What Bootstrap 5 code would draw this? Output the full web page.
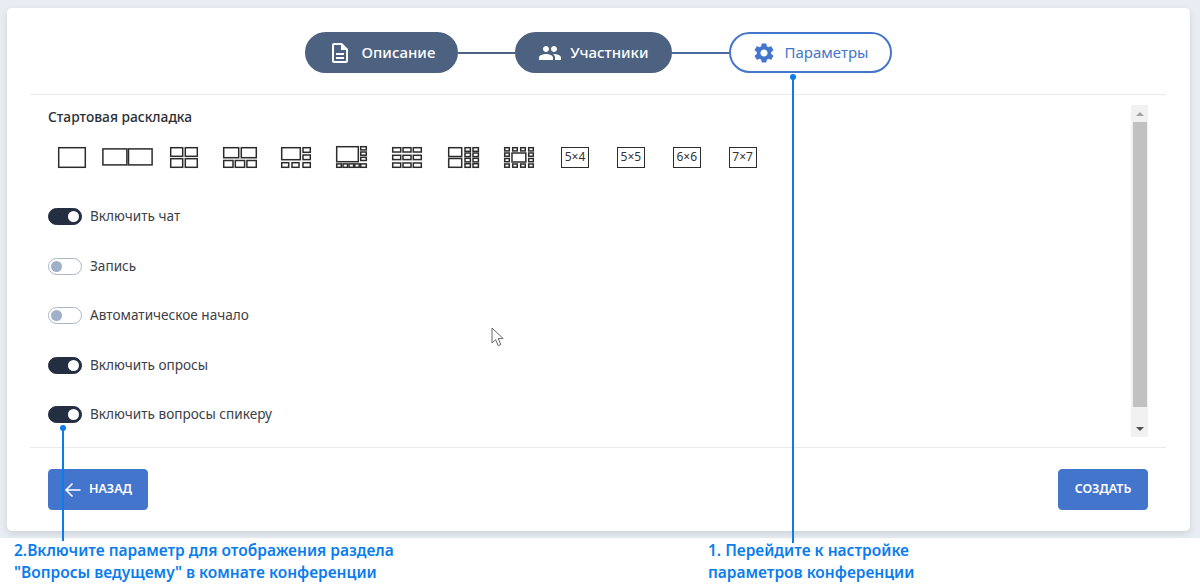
<!DOCTYPE html>
<html lang="ru">
<head>
<meta charset="utf-8">
<title>Параметры</title>
<link href="https://cdn.jsdelivr.net/npm/bootstrap@5.3.0/dist/css/bootstrap.min.css" rel="stylesheet">
<style>
html,body{height:586px;overflow:hidden;background:#fff;}
body{font-family:"Noto Sans","Open Sans",sans-serif;color:#3c4149;position:relative;}
.shell{height:538px;background:#e9edf3;padding:8px 10px 7px 7px;}
.panel{height:523px;border:0;border-radius:5px;box-shadow:0 3px 7px rgba(40,50,70,.14);}
.stepper{padding-top:24px;height:86px;}
.stepitem{height:41px;border-radius:21px;padding:0 23px;background:#4d6280;color:#fff;font-size:15px;font-weight:500;border:2px solid #4d6280;}
.stepitem svg{width:24px;height:24px;fill:currentColor;flex:none;}
.stepitem.gap-a{gap:10px;padding:0 21px;}
.stepitem.gap-b{gap:8px;padding:0 21px;}
.stepitem.gap-c{gap:9px;padding:0 22px 0 21px;background:#fff;color:#4375cc;border-color:#4375cc;font-weight:400;}
.connector{width:57px;height:2px;background:#4d6280;margin-top:20px;}
.connector.last{background:#4a6a9e;}
.rule{height:1px;background:#e8e9ea;margin:0 24px 0 23px;flex:none;}
.bodyarea{height:352px;padding:10px 42px 10px 41px;}
.settings{min-width:0;}
.heading{font-size:13.75px;font-weight:500;color:#2b2f36;line-height:24px;}
.layouts{display:grid;grid-template-columns:repeat(13,55.9px);margin:17px 0 0 -4px;height:22px;}
.cell{display:flex;justify-content:center;align-items:center;}
.cell svg{display:block;fill:none;stroke:#2c2c2c;stroke-width:1.5;overflow:visible;}
.countbox{width:28px;height:21px;border:1.5px solid #2c2c2c;font-size:12px;color:#333;line-height:18px;text-align:center;}
.toggles{margin-top:40px;gap:32.5px;}
.togglerow{height:17px;margin:0;padding:0;min-height:0;gap:8px;}
.togglerow .form-check-input{width:34px;height:17px;margin:0;float:none;border-radius:9px;box-shadow:none;border:1.5px solid #a9b6c9;background-color:#fff;background-size:auto;background-position:2px center;
 background-image:url("data:image/svg+xml,%3csvg xmlns='http://www.w3.org/2000/svg' width='11' height='11'%3e%3ccircle cx='5.5' cy='5.5' r='5.5' fill='%23a0b0c8'/%3e%3c/svg%3e");}
.togglerow .form-check-input:checked{background-color:#232e40;border-color:#232e40;background-position:right 2px center;
 background-image:url("data:image/svg+xml,%3csvg xmlns='http://www.w3.org/2000/svg' width='11' height='11'%3e%3ccircle cx='5.5' cy='5.5' r='5.5' fill='%23fff'/%3e%3c/svg%3e");}
.togglerow .form-check-label{font-size:13.6px;color:#3c4149;line-height:17px;padding-bottom:2px;}
.fakebar{width:17px;background:#f1f1f1;flex:none;}
.fakebar .arrow{height:17px;display:flex;align-items:center;justify-content:center;}
.arrow i{display:block;width:0;height:0;border-left:4px solid transparent;border-right:4px solid transparent;}
.arrow .up{border-bottom:4px solid #a3a3a3;}
.arrow .down{border-top:4px solid #505050;}
.thumb{height:285px;background:#c1c1c1;margin:0 1px 0 2px;}
.footerbar{padding:21px 42px 0 41px;}
.actionbtn{height:41px;background:#4375cc;border:1px solid #4375cc;color:#fff;font-size:12.5px;font-weight:600;border-radius:4px;padding:0;display:flex;align-items:center;justify-content:center;gap:7px;}
.actionbtn:hover{background:#4375cc;color:#fff;}
.actionbtn.back{width:100px;}
.actionbtn.create{width:90px;}
.actionbtn svg{width:18px;height:18px;stroke:#fff;stroke-width:1.6;fill:none;}
.notes{height:48px;padding-top:1px;color:#0a7cee;font-size:15.5px;font-weight:600;line-height:22px;}
.noteleft{margin-left:14px;width:694px;}
.pointer{position:absolute;width:2px;background:#0a7cee;}
.pointer::before{content:"";position:absolute;left:-2px;top:-3px;width:6px;height:6px;border-radius:50%;background:#0a7cee;}
.pointer.one{left:792px;top:77px;height:466px;}
.pointer.two{left:62px;top:428px;height:113px;}
.cursorglyph{position:absolute;left:491px;top:327px;width:14px;height:20px;}
</style>
</head>
<body>
<div class="shell">
  <div class="card panel">
    <div class="stepper d-flex justify-content-center align-items-start">
      <div class="stepitem gap-a d-flex align-items-center">
        <svg viewBox="0 0 24 24"><path d="M8 16h8v2H8zm0-4h8v2H8zm6-10H6c-1.1 0-2 .9-2 2v16c0 1.1.89 2 1.99 2H18c1.1 0 2-.9 2-2V8l-6-6zm4 18H6V4h7v5h5v11z"/></svg>
        <span>Описание</span>
      </div>
      <div class="connector"></div>
      <div class="stepitem gap-b d-flex align-items-center">
        <svg viewBox="0 0 24 24"><path d="M16 11c1.66 0 2.99-1.34 2.99-3S17.66 5 16 5c-1.66 0-3 1.34-3 3s1.34 3 3 3zm-8 0c1.66 0 2.99-1.34 2.99-3S9.66 5 8 5C6.34 5 5 6.34 5 8s1.34 3 3 3zm0 2c-2.33 0-7 1.17-7 3.5V19h14v-2.5c0-2.33-4.67-3.5-7-3.5zm8 0c-.29 0-.62.02-.97.05 1.16.84 1.97 1.97 1.97 3.45V19h6v-2.5c0-2.33-4.67-3.5-7-3.5z"/></svg>
        <span>Участники</span>
      </div>
      <div class="connector last"></div>
      <div class="stepitem gap-c d-flex align-items-center">
        <svg viewBox="0 0 24 24"><path d="M19.14 12.94c.04-.3.06-.61.06-.94 0-.32-.02-.64-.07-.94l2.03-1.58c.18-.14.23-.41.12-.61l-1.92-3.32c-.12-.22-.37-.29-.59-.22l-2.39.96c-.5-.38-1.03-.7-1.62-.94l-.36-2.54c-.04-.24-.24-.41-.48-.41h-3.84c-.24 0-.43.17-.47.41l-.36 2.54c-.59.24-1.13.57-1.62.94l-2.39-.96c-.22-.08-.47 0-.59.22L2.74 8.87c-.12.21-.08.47.12.61l2.03 1.58c-.05.3-.09.63-.09.94s.02.64.07.94l-2.03 1.58c-.18.14-.23.41-.12.61l1.92 3.32c.12.22.37.29.59.22l2.39-.96c.5.38 1.03.7 1.62.94l.36 2.54c.05.24.24.41.48.41h3.84c.24 0 .44-.17.47-.41l.36-2.54c.59-.24 1.13-.56 1.62-.94l2.39.96c.22.08.47 0 .59-.22l1.92-3.32c.12-.22.07-.47-.12-.61l-2.01-1.58zM12 15.6c-1.98 0-3.6-1.62-3.6-3.6s1.62-3.6 3.6-3.6 3.6 1.62 3.6 3.6-1.62 3.6-3.6 3.6z"/></svg>
        <span>Параметры</span>
      </div>
    </div>
    <div class="rule"></div>
    <div class="bodyarea d-flex justify-content-between">
      <div class="settings flex-grow-1">
        <div class="heading">Стартовая раскладка</div>
        <div class="layouts">
          <div class="cell"><svg width="28" height="21"><rect x=".7" y=".7" width="26.6" height="19.6"/></svg></div>
          <div class="cell"><svg width="51" height="18"><rect x=".9" y=".9" width="24" height="16"/><rect x="26.5" y=".9" width="23.6" height="16"/></svg></div>
          <div class="cell"><svg width="28" height="21"><rect x=".7" y=".7" width="12" height="8.6"/><rect x="15.3" y=".7" width="12" height="8.6"/><rect x="0.7" y="11.7" width="12" height="8.6"/><rect x="15.3" y="11.7" width="12" height="8.6"/></svg></div>
          <div class="cell"><svg width="34" height="21"><rect x=".7" y=".7" width="15" height="10"/><rect x="18.3" y=".7" width="15" height="10"/><rect x=".7" y="13.5" width="9.3" height="6.8"/><rect x="12.3" y="13.5" width="9.3" height="6.8"/><rect x="23.9" y="13.5" width="9.4" height="6.8"/></svg></div>
          <div class="cell"><svg width="30" height="21"><rect x=".7" y=".7" width="18.6" height="12"/><rect x="22" y=".7" width="7.3" height="4.6"/><rect x="22" y="8" width="7.3" height="4.6"/><rect x=".7" y="15.7" width="7" height="4.6"/><rect x="11" y="15.7" width="7" height="4.6"/><rect x="22" y="15.7" width="7.3" height="4.6"/></svg></div>
          <div class="cell"><svg width="31" height="22"><rect x=".7" y=".7" width="21.6" height="15"/><rect x="24.7" y=".7" width="5.6" height="3.2"/><rect x="24.7" y="6" width="5.6" height="3.2"/><rect x="24.7" y="11.3" width="5.6" height="3.2"/><rect x="24.7" y="17.9" width="5.6" height="3.4"/><rect x=".7" y="17.9" width="4.6" height="3.4"/><rect x="7" y="17.9" width="4.6" height="3.4"/><rect x="13" y="17.9" width="4.6" height="3.4"/><rect x="18.8" y="17.9" width="4.4" height="3.4"/></svg></div>
          <div class="cell"><svg width="30" height="21"><rect x=".7" y=".7" width="8" height="4.3"/><rect x="11" y=".7" width="8" height="4.3"/><rect x="21.3" y=".7" width="8" height="4.3"/><rect x=".7" y="8.3" width="8" height="4.3"/><rect x="11" y="8.3" width="8" height="4.3"/><rect x="21.3" y="8.3" width="8" height="4.3"/><rect x=".7" y="16" width="8" height="4.3"/><rect x="11" y="16" width="8" height="4.3"/><rect x="21.3" y="16" width="8" height="4.3"/></svg></div>
          <div class="cell"><svg width="31" height="21"><rect x=".7" y=".7" width="13" height="8.8"/><rect x=".7" y="11.5" width="13" height="8.8"/><rect x="17" y=".7" width="5.4" height="3.6"/><rect x="25" y=".7" width="5.4" height="3.6"/><rect x="17" y="6" width="5.4" height="3.6"/><rect x="25" y="6" width="5.4" height="3.6"/><rect x="17" y="11.3" width="5.4" height="3.6"/><rect x="25" y="11.3" width="5.4" height="3.6"/><rect x="17" y="16.7" width="5.4" height="3.6"/><rect x="25" y="16.7" width="5.4" height="3.6"/></svg></div>
          <div class="cell"><svg width="30" height="21"><rect x=".7" y=".7" width="4.6" height="3.2"/><rect x="8.7" y=".7" width="4.6" height="3.2"/><rect x="16.7" y=".7" width="4.6" height="3.2"/><rect x="24.7" y=".7" width="4.6" height="3.2"/><rect x=".7" y="6" width="4.6" height="3.2"/><rect x=".7" y="11.5" width="4.6" height="3.2"/><rect x=".7" y="17" width="4.6" height="3.2"/><rect x="24.7" y="6" width="4.6" height="3.2"/><rect x="24.7" y="11.5" width="4.6" height="3.2"/><rect x="24.7" y="17" width="4.6" height="3.2"/><rect x="8.7" y="17" width="4.6" height="3.2"/><rect x="16.7" y="17" width="4.6" height="3.2"/><rect x="8" y="6" width="13.8" height="9"/></svg></div>
          <div class="cell"><div class="countbox">5×4</div></div>
          <div class="cell"><div class="countbox">5×5</div></div>
          <div class="cell"><div class="countbox">6×6</div></div>
          <div class="cell"><div class="countbox">7×7</div></div>
        </div>
        <div class="toggles d-flex flex-column">
          <div class="form-check form-switch togglerow d-flex align-items-center">
            <input class="form-check-input" type="checkbox" id="t1" checked>
            <label class="form-check-label" for="t1">Включить чат</label>
          </div>
          <div class="form-check form-switch togglerow d-flex align-items-center">
            <input class="form-check-input" type="checkbox" id="t2">
            <label class="form-check-label" for="t2">Запись</label>
          </div>
          <div class="form-check form-switch togglerow d-flex align-items-center">
            <input class="form-check-input" type="checkbox" id="t3">
            <label class="form-check-label" for="t3">Автоматическое начало</label>
          </div>
          <div class="form-check form-switch togglerow d-flex align-items-center">
            <input class="form-check-input" type="checkbox" id="t4" checked>
            <label class="form-check-label" for="t4">Включить опросы</label>
          </div>
          <div class="form-check form-switch togglerow d-flex align-items-center">
            <input class="form-check-input" type="checkbox" id="t5" checked>
            <label class="form-check-label" for="t5">Включить вопросы спикеру</label>
          </div>
        </div>
      </div>
      <div class="fakebar d-flex flex-column justify-content-between">
        <div><div class="arrow"><i class="up"></i></div><div class="thumb"></div></div>
        <div class="arrow"><i class="down"></i></div>
      </div>
    </div>
    <div class="rule"></div>
    <div class="footerbar d-flex justify-content-between">
      <button type="button" class="btn actionbtn back">
        <svg viewBox="0 0 18 18"><path d="M16.5 9H2M8.5 2.5 2 9l6.5 6.5"/></svg>
        <span>НАЗАД</span>
      </button>
      <button type="button" class="btn actionbtn create">СОЗДАТЬ</button>
    </div>
  </div>
</div>
<div class="notes d-flex">
  <div class="noteleft">2.Включите параметр для отображения раздела<br>"Вопросы ведущему" в комнате конференции</div>
  <div>1. Перейдите к настройке<br>параметров конференции</div>
</div>
<div class="pointer one"></div>
<div class="pointer two"></div>
<svg class="cursorglyph" viewBox="0 0 14 20"><path d="M1 1v15l3.6-3.4 2.6 6 2.6-1.1-2.6-5.9h5z" fill="#fff" stroke="#666" stroke-width="1"/></svg>
</body>
</html>
